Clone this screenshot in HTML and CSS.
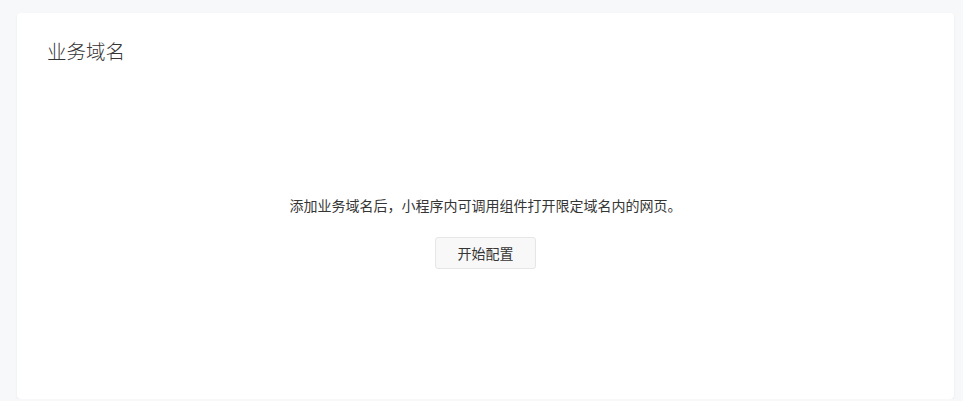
FILE: index.html
```html
<!DOCTYPE html>
<html lang="zh-CN">
<head>
    <meta charset="UTF-8">
    <meta name="viewport" content="width=device-width, initial-scale=1.0">
    <title>业务域名</title>
    <link rel="stylesheet" href="styles.css">
</head>
<body>
    <div class="panel">
        <h2 class="panel-title">业务域名</h2>

        <div class="empty">
            <p class="empty-tip">添加业务域名后，小程序内可调用组件打开限定域名内的网页。</p>
            <button class="btn">开始配置</button>
        </div>
    </div>
</body>
</html>
```

FILE: styles.css
```css
body {
    margin: 0;
    padding: 13px 9px 0 17px;
    background-color: #f7f8fa;
    font-family: "Noto Sans CJK SC", "Noto Sans", sans-serif;
    color: #353535;
}

.panel {
    height: 386px;
    box-sizing: border-box;
    padding: 24px 30px;
    background-color: #fff;
    border-radius: 4px;
    box-shadow: 0 1px 2px rgba(0,0,0,0.08);
}

.panel-title {
    margin: 0;
    font-size: 19.5px;
    font-weight: 300;
    line-height: 28px;
}

.empty {
    display: flex;
    flex-direction: column;
    align-items: center;
    margin-top: 130px;
}

.empty-tip {
    margin: 0;
    font-size: 14px;
    line-height: 20px;
}

.btn {
    margin-top: 22px;
    width: 101px;
    height: 32px;
    background-color: #f8f8f8;
    border: 1px solid #e6e6e6;
    border-radius: 3px;
    font-family: inherit;
    font-size: 14px;
    color: #353535;
    cursor: pointer;
}
```
